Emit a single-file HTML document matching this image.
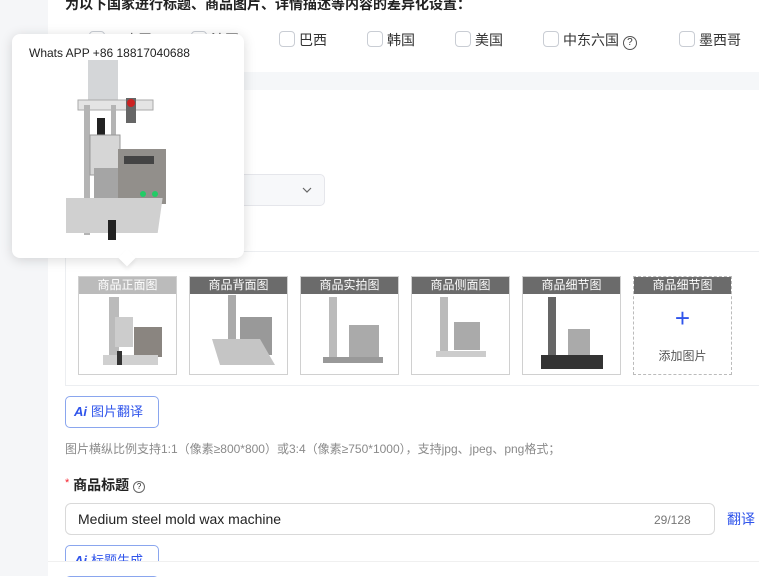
<!DOCTYPE html>
<html><head><meta charset="utf-8"><style>
*{box-sizing:border-box;margin:0;padding:0}
body{width:759px;height:576px;overflow:hidden;background:#fff;font-family:"Liberation Sans","Noto Sans CJK SC",sans-serif;color:#333;position:relative;font-size:13px}
.abs{position:absolute}
.cb{position:absolute;top:31px;width:16px;height:16px;border:1px solid #c9cdd4;border-radius:4px;background:#fff}
.cl{position:absolute;top:30px;font-size:14px;color:#333}
.thumb{position:absolute;top:276px;width:99px;height:99px;border:1px solid #d0d0d0;background:#fff;overflow:hidden}
.thumb .lab{position:absolute;left:0;top:0;width:100%;height:17px;background:#6b6b6b;color:#fff;font-size:12px;text-align:center;line-height:17px}
.aibtn{position:absolute;left:65px;width:94px;height:32px;border:1px solid #8aa6ee;border-radius:5px;color:#2f54eb;font-size:13px;line-height:30px;padding-left:8px}
.aibtn b{font-style:italic;font-weight:bold;margin-right:4px}
</style></head><body>
<div class="abs" style="left:0;top:0;width:48px;height:576px;background:#f5f6f8"></div>
<div class="abs" style="left:48px;top:72px;width:711px;height:18px;background:#f5f7f9"></div>
<div class="abs" style="left:65px;top:90px;width:1px;height:162px;background:#eef0f2"></div>
<div class="abs" style="left:65px;top:-6px;font-weight:bold;font-size:14px;color:#222">为以下国家进行标题、商品图片、详情描述等内容的差异化设置：</div>
<div class="cb" style="left:89px"></div><div class="cl" style="left:110px">西班牙</div>
<div class="cb" style="left:191px"></div><div class="cl" style="left:211px">法国</div>
<div class="cb" style="left:279px"></div><div class="cl" style="left:299px">巴西</div>
<div class="cb" style="left:367px"></div><div class="cl" style="left:387px">韩国</div>
<div class="cb" style="left:455px"></div><div class="cl" style="left:475px">美国</div>
<div class="cb" style="left:543px"></div><div class="cl" style="left:563px">中东六国 <span style="display:inline-block;width:14px;height:14px;border:1px solid #555;border-radius:50%;font-size:10px;line-height:12px;text-align:center;vertical-align:0px">?</span></div>
<div class="cb" style="left:679px"></div><div class="cl" style="left:699px">墨西哥</div>
<div class="abs" style="left:200px;top:174px;width:125px;height:32px;background:#f7f8fa;border:1px solid #e5e6eb;border-radius:5px"></div>
<svg class="abs" style="left:302px;top:186px" width="10" height="8"><path d="M1 2l4 4 4-4" stroke="#666" fill="none" stroke-width="1.2"/></svg>
<div class="abs" style="left:65px;top:251px;width:694px;height:135px;background:#fff;border:1px solid #eceef1;border-right:none"></div>
<div class="thumb" style="left:78px"><svg width="99" height="99"><rect x="30" y="20" width="10" height="60" fill="#bbb"/><rect x="36" y="40" width="18" height="30" fill="#ccc"/><rect x="55" y="50" width="28" height="30" fill="#8a8580"/><rect x="24" y="78" width="55" height="10" fill="#d0d0d0"/><rect x="38" y="74" width="5" height="14" fill="#333"/></svg><div class="lab" style="background:rgba(120,120,120,.5)">商品正面图</div></div>
<div class="thumb" style="left:189px"><svg width="99" height="99"><rect x="38" y="18" width="8" height="55" fill="#aaa"/><rect x="50" y="40" width="32" height="38" fill="#999"/><polygon points="22,62 70,62 85,88 30,88" fill="#c5c5c5"/></svg><div class="lab">商品背面图</div></div>
<div class="thumb" style="left:300px"><svg width="99" height="99"><rect x="28" y="20" width="8" height="62" fill="#bbb"/><rect x="48" y="48" width="30" height="32" fill="#aaa"/><rect x="22" y="80" width="60" height="6" fill="#999"/></svg><div class="lab">商品实拍图</div></div>
<div class="thumb" style="left:411px"><svg width="99" height="99"><rect x="28" y="20" width="8" height="55" fill="#bbb"/><rect x="42" y="45" width="26" height="28" fill="#aaa"/><rect x="24" y="74" width="50" height="6" fill="#ccc"/></svg><div class="lab">商品侧面图</div></div>
<div class="thumb" style="left:522px"><svg width="99" height="99"><rect x="25" y="20" width="8" height="60" fill="#666"/><rect x="45" y="52" width="22" height="30" fill="#aaa"/><rect x="18" y="78" width="62" height="14" fill="#333"/></svg><div class="lab">商品细节图</div></div>
<div class="thumb" style="left:633px;border:1px dashed #bbb"><div class="lab">商品细节图</div><div class="abs" style="left:0;width:100%;top:28px;text-align:center;color:#2f54eb;font-size:26px;line-height:26px">+</div><div class="abs" style="left:0;width:100%;top:70px;text-align:center;color:#555;font-size:12px">添加图片</div></div>
<div class="aibtn" style="top:396px"><b>Ai</b>图片翻译</div>
<div class="abs" style="left:65px;top:440px;font-size:12px;color:#8a8a8a">图片横纵比例支持1:1（像素≥800*800）或3:4（像素≥750*1000），支持jpg、jpeg、png格式；</div>
<div class="abs" style="left:65px;top:475px;font-size:14px;font-weight:bold;color:#222"><span style="color:#f5222d;font-size:11px;vertical-align:4px;font-weight:normal">*</span> 商品标题 <span style="display:inline-block;width:12px;height:12px;border:1px solid #666;border-radius:50%;font-size:8px;line-height:10px;text-align:center;font-weight:normal;vertical-align:1px">?</span></div>
<div class="abs" style="left:65px;top:503px;width:650px;height:32px;border:1px solid #d9d9d9;border-radius:6px"></div>
<div class="abs" style="left:78px;top:511px;font-size:14px;color:#222">Medium steel mold wax machine</div>
<div class="abs" style="left:654px;top:513px;font-size:12px;color:#777">29/128</div>
<div class="abs" style="left:727px;top:509px;font-size:14px;color:#2f54eb">翻译</div>
<div class="aibtn" style="top:545px;height:32px"><b>Ai</b>标题生成</div>
<div class="abs" style="left:48px;top:561px;width:711px;height:15px;background:#fff;border-top:1px solid #f0f0f0"></div>
<div class="abs" style="left:12px;top:34px;width:232px;height:224px;background:#fff;border-radius:8px;box-shadow:0 2px 12px rgba(0,0,0,.15)"></div>
<div class="abs" style="left:121px;top:252px;width:12px;height:12px;background:#fff;transform:rotate(45deg);box-shadow:2px 2px 4px rgba(0,0,0,.08)"></div>
<div class="abs" style="left:29px;top:46px;font-size:12px;color:#222">Whats APP +86 18817040688</div>
<svg class="abs" style="left:66px;top:60px" width="125" height="185">
<rect x="22" y="0" width="30" height="45" fill="#d4d6d8"/>
<rect x="12" y="40" width="75" height="10" fill="#e4e4e4" stroke="#aaa"/>
<rect x="18" y="45" width="6" height="130" fill="#b4b4b4"/>
<rect x="45" y="45" width="5" height="120" fill="#b4b4b4"/>
<rect x="60" y="38" width="10" height="25" fill="#666"/><circle cx="65" cy="43" r="4" fill="#c22"/>
<rect x="31" y="58" width="8" height="25" fill="#222"/>
<rect x="24" y="75" width="30" height="40" fill="#d6d6d6" stroke="#999"/>
<rect x="28" y="108" width="25" height="45" fill="#a5a5a5"/>
<rect x="52" y="89" width="48" height="55" fill="#928f8b"/>
<rect x="58" y="96" width="30" height="8" fill="#444"/>
<circle cx="77" cy="134" r="3" fill="#2c6"/><circle cx="89" cy="134" r="3" fill="#2c6"/>
<rect x="10" y="138" width="106" height="35" fill="#d0d0d0" transform="skewX(-8)"/>
<rect x="42" y="160" width="8" height="20" fill="#222"/>
</svg>
</body></html>
